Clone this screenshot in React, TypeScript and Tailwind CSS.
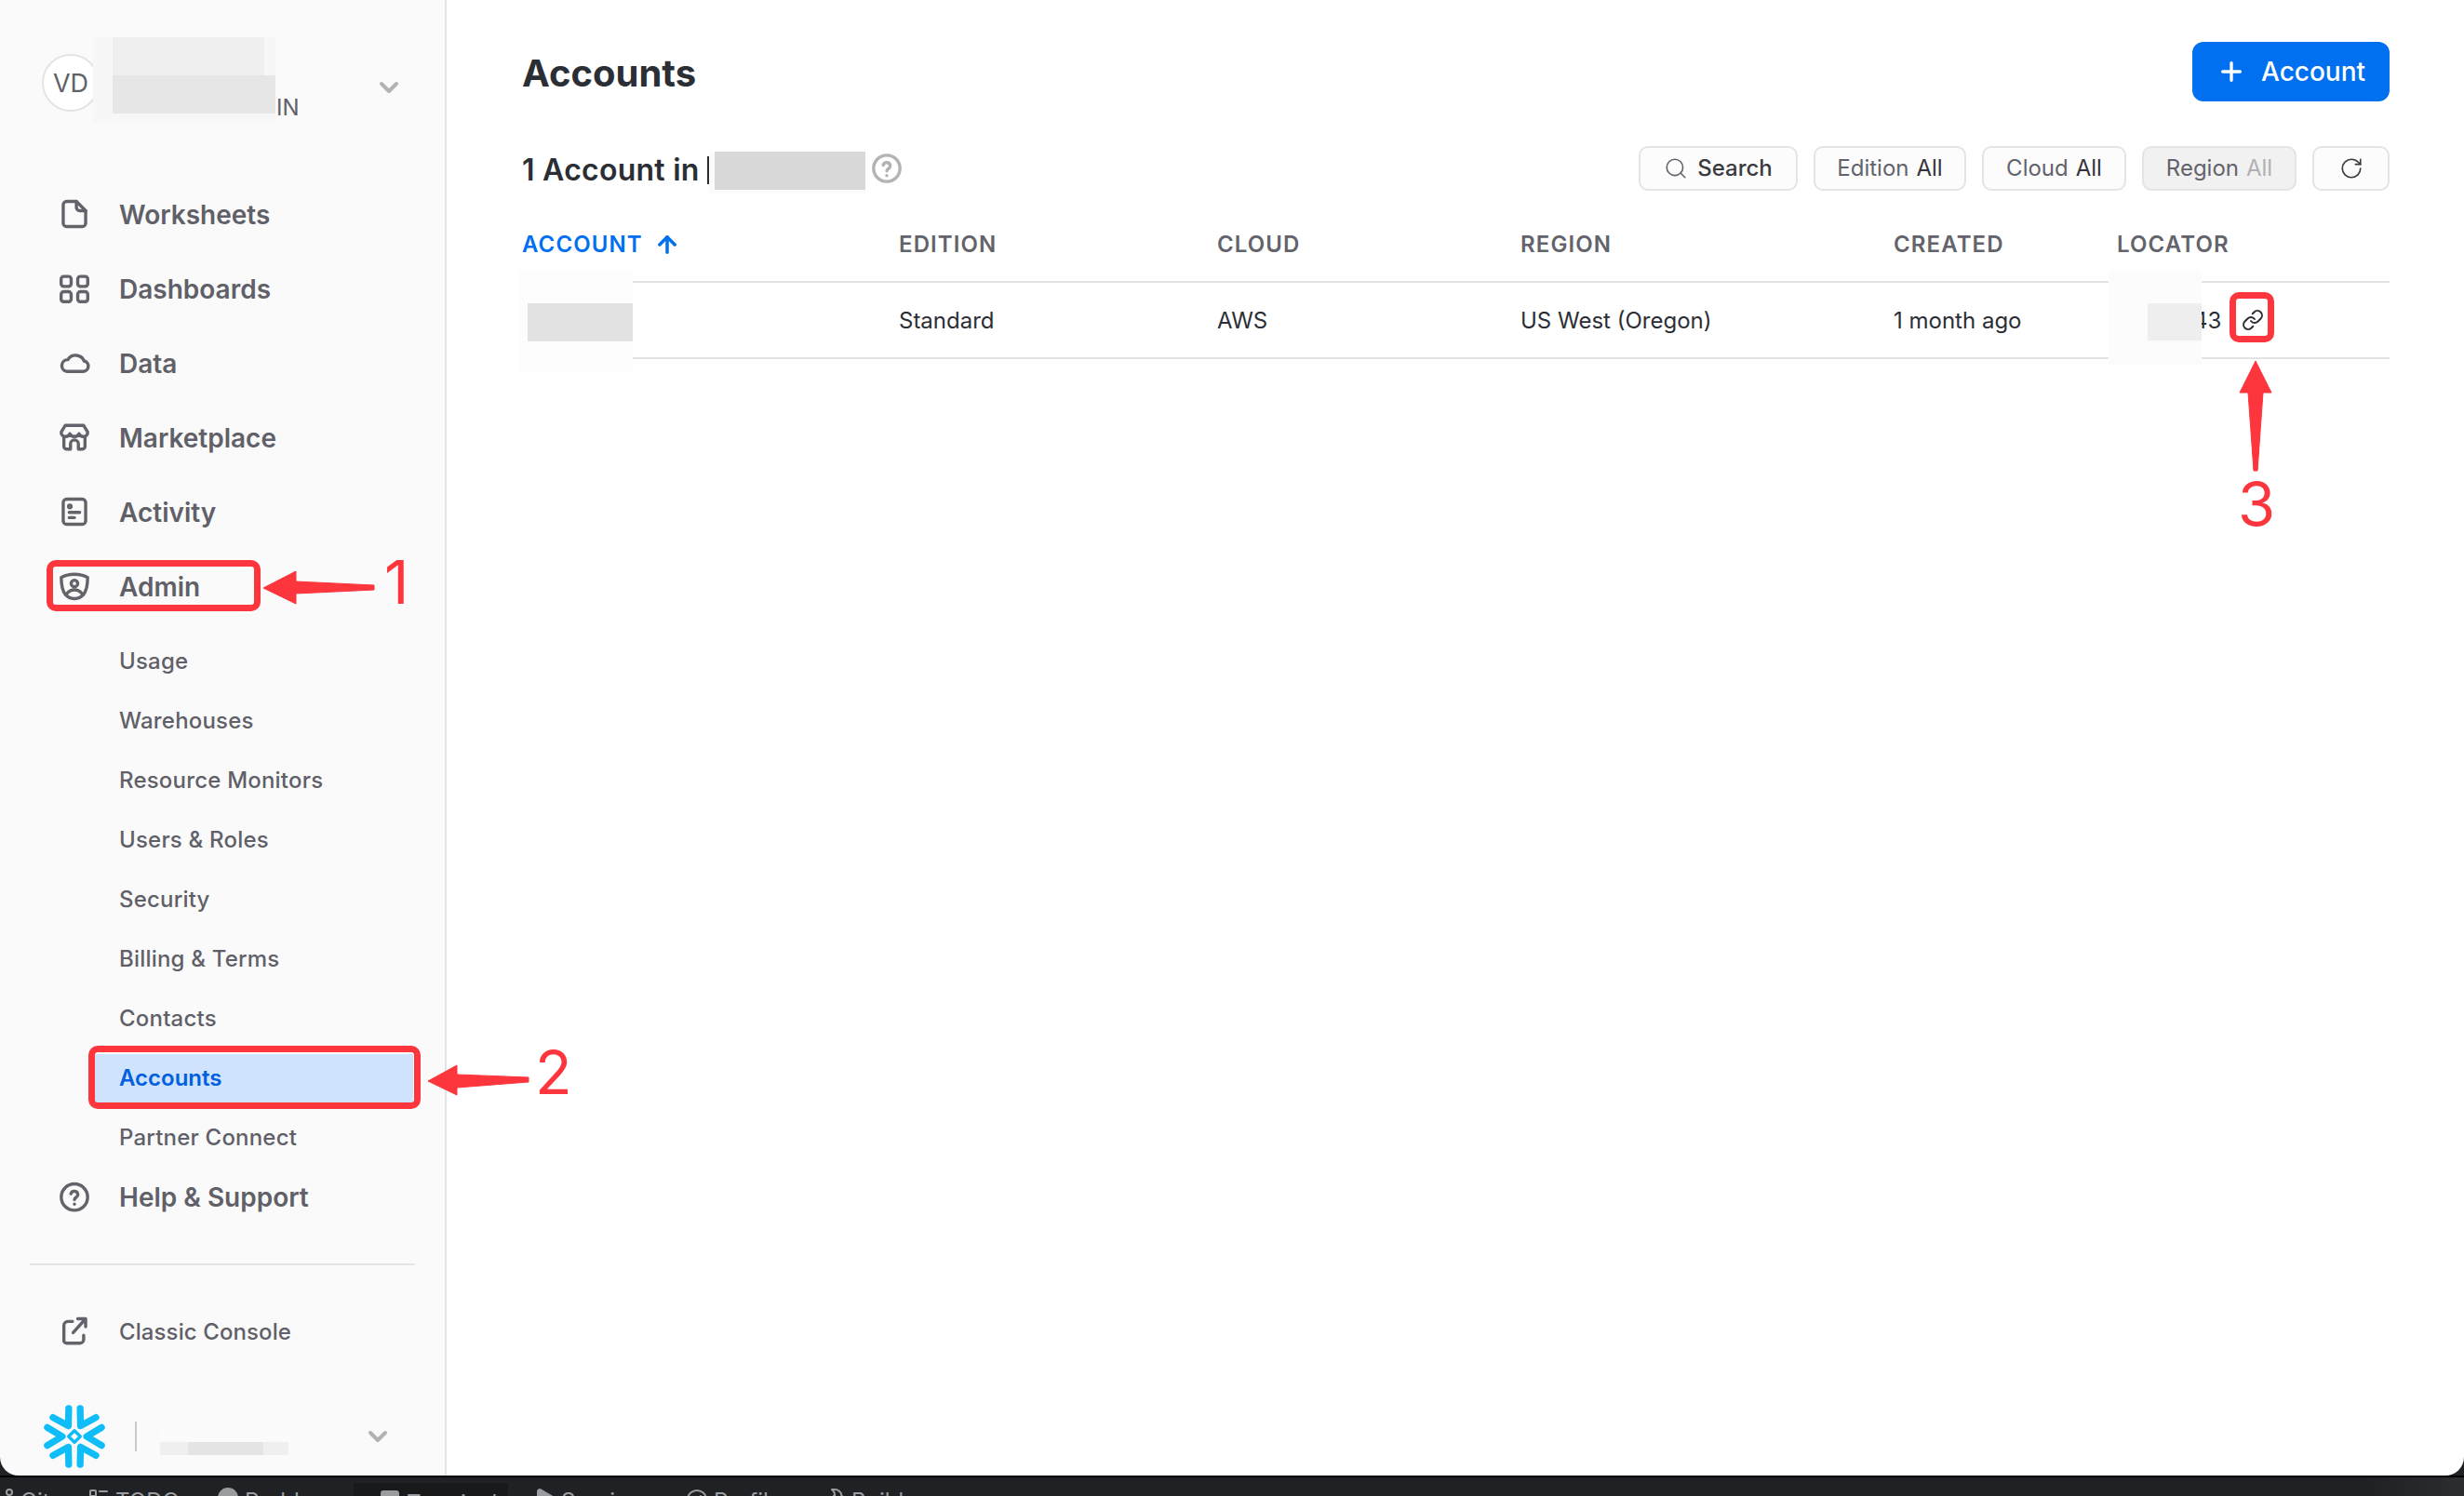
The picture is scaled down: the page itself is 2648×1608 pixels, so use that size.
import {
  ArrowUp,
  ChevronDown,
  CircleAlert,
  Gauge,
  GitBranch,
  Hammer,
  Link,
  ListTodo,
  Play,
  Plus,
  RotateCw,
  Search,
  SquareTerminal,
} from "lucide-react";
import type { ReactNode } from "react";

function NavIcon({ children }: { children: ReactNode }) {
  return (
    <svg
      viewBox="0 0 24 24"
      className="mb-[3px] h-[34px] w-[34px] shrink-0"
      fill="none"
      stroke="#62636b"
      strokeWidth={2.4}
      strokeLinecap="round"
      strokeLinejoin="round"
    >
      {children}
    </svg>
  );
}

const navItems: { label: string; icon: ReactNode }[] = [
  {
    label: "Worksheets",
    icon: (
      <>
        <path d="M13.5 2.5H6A2.5 2.5 0 0 0 3.5 5v14A2.5 2.5 0 0 0 6 21.5h12a2.5 2.5 0 0 0 2.5-2.5V9.5z" />
        <path d="M13.5 2.5V7A2.5 2.5 0 0 0 16 9.5h4.5" />
      </>
    ),
  },
  {
    label: "Dashboards",
    icon: (
      <>
        <rect x="1.9" y="2.9" width="7.6" height="7.6" rx="2" />
        <rect x="14.5" y="2.9" width="7.6" height="7.6" rx="2" />
        <rect x="1.9" y="14.5" width="7.6" height="7.6" rx="2" />
        <rect x="14.5" y="14.5" width="7.6" height="7.6" rx="2" />
      </>
    ),
  },
  {
    label: "Data",
    icon: (
      <path d="M6 18.5h12.5a4 4 0 0 0 .9-7.9A7 7 0 0 0 7 9.6a4.5 4.5 0 0 0-1 8.9z" />
    ),
  },
  {
    label: "Marketplace",
    icon: (
      <>
        <path d="M5 3h14l3 5c.3 2-1.3 3.5-3.2 3.5-1.6 0-2.8-.9-3.3-2.2-.5 1.3-1.8 2.2-3.5 2.2s-3-.9-3.5-2.2c-.5 1.3-1.7 2.2-3.3 2.2C3.3 11.5 1.7 10 2 8z" />
        <path d="M4 12v7a2 2 0 0 0 2 2h3v-4a3 3 0 0 1 6 0v4h3a2 2 0 0 0 2-2v-7" />
      </>
    ),
  },
  {
    label: "Activity",
    icon: (
      <>
        <rect x="3.5" y="2.5" width="17" height="19" rx="2.5" />
        <circle cx="8.5" cy="8" r="1" />
        <path d="M8 12.5h8M8 16.5h4" />
      </>
    ),
  },
  {
    label: "Admin",
    icon: (
      <>
        <path d="M12 3c3.5 0 7 .8 10 2.5 0 6-1.200 10.500-3.200 13-1.700 2-4.300 3-6.800 3s-5.100-1-6.800-3C3.200 16 2 11.500 2 5.500 5 3.800 8.500 3 12 3z" />
        <circle cx="12" cy="10" r="2.5" />
        <path d="M6.500 17.500c1.200-1.700 3.200-2.700 5.500-2.700s4.300 1 5.500 2.700" />
      </>
    ),
  },
];

const adminItems = [
  "Usage",
  "Warehouses",
  "Resource Monitors",
  "Users & Roles",
  "Security",
  "Billing & Terms",
  "Contacts",
  "Accounts",
  "Partner Connect",
];

const columns = ["EDITION", "CLOUD", "REGION", "CREATED", "LOCATOR"];

function SnowflakeLogo() {
  return (
    <svg viewBox="-35 -35 70 70" className="h-[68px] w-[68px] shrink-0">
      {[0, 60, 120, 180, 240, 300].map((angle) => (
        <path
          key={angle}
          d="M30 -10 L13.5 0 L30 10"
          fill="none"
          stroke="#0fbdf9"
          strokeWidth={7.5}
          strokeLinecap="round"
          strokeLinejoin="round"
          transform={`rotate(${angle})`}
        />
      ))}
      <path d="M0 -6.5 L6.5 0 L0 6.5 L-6.5 0 Z" fill="none" stroke="#0fbdf9" strokeWidth={3.5} strokeLinejoin="round" />
    </svg>
  );
}

function Sidebar() {
  return (
    <aside className="flex w-[480px] shrink-0 flex-col border-r-2 border-[#e4e4e4] bg-[#fafafa] text-[#5f6068]">
      <div className="flex h-[191px] shrink-0 items-start pl-[45px] pr-[44px] pt-[58px]">
        <div className="flex h-[62px] w-[62px] shrink-0 items-center justify-center rounded-full border-2 border-[#e4e4e4] bg-white pt-[2px] text-[27px] text-[#5f6068]">
          VD
        </div>
        <div className="flex-1 pl-[190px] pt-[44px] text-[24px] leading-[28px]">IN</div>
        <ChevronDown size={32} strokeWidth={3} className="mt-[20px] text-[#b2b2b4]" />
      </div>

      {navItems.map((item) => (
        <div key={item.label} className="flex h-[80px] shrink-0 items-center gap-[31px] pl-[63px] text-[28px] font-semibold">
          <NavIcon>{item.icon}</NavIcon>
          <span>{item.label}</span>
        </div>
      ))}

      <div className="mt-[8px] flex flex-col">
        {adminItems.map((label) =>
          label === "Accounts" ? (
            <div key={label} className="mx-[102px] my-[6px] mr-[34px] flex h-[52px] shrink-0 items-center bg-[#cfe3fd] pl-[26px] text-[24px] font-semibold text-[#0060e0]">
              {label}
            </div>
          ) : (
            <div key={label} className="flex h-[64px] shrink-0 items-center pl-[128px] text-[24px] font-medium tracking-[0.2px]">
              {label}
            </div>
          ),
        )}
      </div>

      <div className="flex h-[64px] shrink-0 items-center gap-[31px] pl-[63px] text-[28px] font-semibold">
        <NavIcon>
          <circle cx="12" cy="12.5" r="10" />
          <path d="M9.3 10a2.700 2.700 0 0 1 5.300.7c0 1.800-2.600 2.300-2.600 3.700" />
          <path d="M12 17.700v.1" />
        </NavIcon>
        <span>Help &amp; Support</span>
      </div>

      <div className="mx-[32px] mt-[39px] border-t-2 border-[#e4e4e4]" />

      <div className="mt-[40px] flex h-[64px] shrink-0 items-center gap-[31px] pl-[63px] text-[24px] font-medium tracking-[0.1px]">
        <NavIcon>
          <path d="M10.5 4.500H7A3 3 0 0 0 4 7.500V19a2 2 0 0 0 2 2h10a3 3 0 0 0 3-3v-3" />
          <path d="M11 13l9-10M14.500 2.500H20.500V8.500" />
        </NavIcon>
        <span>Classic Console</span>
      </div>

      <div className="mt-auto flex h-[84px] shrink-0 items-center pl-[46px] pr-[56px]">
        <SnowflakeLogo />
        <div className="ml-[31px] h-[32px] w-[2px] bg-[#c8c8c8]" />
        <ChevronDown size={32} strokeWidth={3} className="ml-auto text-[#b2b2b4]" />
      </div>
    </aside>
  );
}

function FilterButton({ label, value, width, disabled }: { label: string; value: string; width: string; disabled?: boolean }) {
  return (
    <button
      className={`flex h-[48px] items-center justify-center gap-[8px] rounded-[10px] border-2 border-[#e4e4e4] text-[24px] ${width} ${
        disabled ? "bg-[#f1f1f1]" : "bg-[#fcfcfc]"
      }`}
    >
      <span className="text-[#62636b]">{label}</span>
      <span className={disabled ? "text-[#b0b0b2]" : "text-[#34353a]"}>{value}</span>
    </button>
  );
}

function Main() {
  return (
    <main className="flex-1 bg-white pl-[81px] pr-[80px] pt-[45px] text-[#2b2e35]">
      <div className="flex h-[64px] items-center justify-between">
        <h1 className="pt-[4px] text-[40px] font-bold">Accounts</h1>
        <button className="flex h-[64px] w-[212px] items-center gap-[16px] rounded-[12px] bg-[#0070f0] pl-[26px] text-[28px] font-medium text-white">
          <Plus size={32} strokeWidth={2.5} />
          Account
        </button>
      </div>

      <div className="mt-[48px] flex h-[48px] items-center">
        <span className="pt-[4px] text-[32px] font-semibold tracking-[0.25px]">1 Account in</span>
        <svg viewBox="0 0 24 24" className="ml-[184px] h-[34px] w-[34px]" fill="none" stroke="#b3b3b5" strokeWidth={2.4} strokeLinecap="round">
          <circle cx="12" cy="12" r="10" />
          <path d="M9.3 9.500a2.700 2.700 0 0 1 5.300.7c0 1.800-2.600 2.300-2.600 3.700" />
          <path d="M12 17.400v.1" />
        </svg>
        <div className="ml-auto flex items-center gap-[17px]">
          <button className="flex h-[48px] w-[171px] items-center justify-center gap-[10px] rounded-[10px] border-2 border-[#e4e4e4] bg-[#fcfcfc] text-[24px] font-medium text-[#3a3b40]">
            <Search size={26} strokeWidth={1.5} className="text-[#62636b]" />
            Search
          </button>
          <FilterButton label="Edition" value="All" width="w-[164px]" />
          <FilterButton label="Cloud" value="All" width="w-[155px]" />
          <FilterButton label="Region" value="All" width="w-[166px]" disabled />
          <button className="flex h-[48px] w-[83px] items-center justify-center rounded-[10px] border-2 border-[#e4e4e4] bg-[#fcfcfc] text-[#3a3b40]">
            <RotateCw size={26} strokeWidth={1.5} />
          </button>
        </div>
      </div>

      <div className="mt-[17px] grid grid-cols-[405px_342px_326px_401px_240px_1fr] text-[24px]">
        <div className="flex h-[82px] items-center gap-[12px] border-b-2 border-[#e4e4e4] pt-[2px] font-semibold tracking-[1.1px] text-[#0070f0]">
          ACCOUNT
          <ArrowUp size={28} strokeWidth={3} />
        </div>
        {columns.map((col) => (
          <div key={col} className="flex h-[82px] items-center border-b-2 border-[#e4e4e4] pt-[2px] font-semibold tracking-[1.1px] text-[#62636b]">
            {col}
          </div>
        ))}
        <div className="h-[82px] border-b-2 border-[#e4e4e4]" />
        {["Standard", "AWS", "US West (Oregon)", "1 month ago"].map((cell) => (
          <div key={cell} className="flex h-[82px] items-center border-b-2 border-[#e4e4e4] pt-[2px]">
            {cell}
          </div>
        ))}
        <div className="flex h-[82px] items-center border-b-2 border-[#e4e4e4] pl-[82px] pt-[2px]">
          <span>43</span>
          <Link size={24} strokeWidth={2} className="ml-[22px] mb-[2px]" />
        </div>
      </div>
    </main>
  );
}

const statusTabs: { label: string; icon: ReactNode; className: string }[] = [
  { label: "Git", icon: <GitBranch size={24} />, className: "-ml-[8px] w-[102px]" },
  { label: "TODO", icon: <ListTodo size={24} />, className: "w-[139px]" },
  { label: "Problems", icon: <CircleAlert size={24} fill="#9a9ca0" />, className: "w-[147px]" },
  { label: "Terminal", icon: <SquareTerminal size={24} fill="#9a9ca0" />, className: "mt-[6px] w-[166px] bg-[#18191b] pl-[27px] !pt-[6px]" },
  { label: "Services", icon: <Play size={24} fill="#9a9ca0" />, className: "w-[191px] pl-[27px]" },
  { label: "Profiler", icon: <Gauge size={24} />, className: "w-[148px]" },
  { label: "Build", icon: <Hammer size={24} />, className: "w-[140px]" },
];

function StatusBar() {
  return (
    <div className="flex h-[22px] shrink-0 overflow-hidden border-t-2 border-black bg-[linear-gradient(90deg,#202124_96%,#2c2d30)]">
      {statusTabs.map((tab) => (
        <div
          key={tab.label}
          className={`flex items-start gap-[6px] pt-[10px] text-[24px] leading-[32px] text-[#9a9ca0] ${tab.className}`}
        >
          {tab.icon}
          <span>{tab.label}</span>
        </div>
      ))}
    </div>
  );
}

// red callouts and the redaction patches sit over the page, same as the markup in the screenshot
function Patch({ className }: { className: string }) {
  return <div className={`absolute ${className}`} />;
}

function Overlays() {
  return (
    <div className="pointer-events-none absolute inset-0">
      <Patch className="left-[100px] top-[40px] h-[92px] w-[196px] bg-[#f7f7f7]" />
      <Patch className="left-[121px] top-[40px] h-[42px] w-[163px] bg-[#eeefee]" />
      <Patch className="left-[121px] top-[81px] h-[41px] w-[175px] bg-[#e6e6e6]" />
      <Patch className="left-[172px] top-[1530px] h-[34px] w-[138px] bg-[#fbfbfb]" />
      <Patch className="left-[172px] top-[1550px] h-[14px] w-[138px] bg-[#efefef]" />
      <Patch className="left-[202px] top-[1550px] h-[14px] w-[81px] bg-[#e4e4e4]" />

      <Patch className="left-[760px] top-[168px] h-[30px] w-[2px] bg-[#2b2e35]" />
      <Patch className="left-[762px] top-[163px] h-[45px] w-[168px] bg-[#fbfbfb]" />
      <Patch className="left-[768px] top-[163px] h-[41px] w-[162px] bg-[#d8d8d8]" />
      <Patch className="left-[558px] top-[290px] h-[110px] w-[122px] bg-[#fdfdfd]" />
      <Patch className="left-[567px] top-[326px] h-[41px] w-[113px] bg-[#e2e2e2]" />
      <Patch className="left-[2266px] top-[292px] h-[100px] w-[100px] bg-[#fcfcfc]" />
      <Patch className="left-[2308px] top-[326px] h-[40px] w-[58px] bg-[#eeeeee]" />

      <div className="absolute left-[50px] top-[602px] h-[55px] w-[230px] rounded-[10px] border-[7px] border-[#fd353c]" />
      <div className="absolute left-[95px] top-[1124px] h-[68px] w-[357px] rounded-[10px] border-[7px] border-[#fd353c]" />
      <div className="absolute left-[2396px] top-[314px] h-[54px] w-[48px] rounded-[10px] border-[7px] border-[#fd353c]" />

      <svg viewBox="0 0 125 40" className="absolute left-[282px] top-[611px] h-[40px] w-[125px]">
        <path d="M1 21 L36 3 L36 14 L120 18 L120 23 L36 27 L36 38 Z" fill="#fd353c" stroke="#fd353c" strokeLinejoin="round" />
      </svg>
      <svg viewBox="0 0 112 36" className="absolute left-[459px] top-[1143px] h-[36px] w-[112px]">
        <path d="M1 19 L32 2 L32 12 L109 15 L109 20 L32 26 L32 34 Z" fill="#fd353c" stroke="#fd353c" strokeLinejoin="round" />
      </svg>
      <svg viewBox="0 0 38 120" className="absolute left-[2405px] top-[387px] h-[120px] w-[38px]">
        <path d="M19 1 L36 35 L27 35 L21 119 L17 119 L11 35 L2 35 Z" fill="#fd353c" stroke="#fd353c" strokeLinejoin="round" />
      </svg>

      <span className="absolute left-[413px] top-[588px] text-[65px] leading-[76px] text-[#fd353c]">1</span>
      <span className="absolute left-[575px] top-[1115px] text-[65px] leading-[76px] text-[#fd353c]">2</span>
      <span className="absolute left-[2405px] top-[504px] text-[65px] leading-[76px] text-[#fd353c]">3</span>
    </div>
  );
}

export default function App() {
  return (
    <div className="relative flex h-[1608px] w-[2648px] flex-col overflow-hidden bg-[#202124] font-['Inter',sans-serif]">
      <div className="flex h-[1586px] shrink-0 overflow-hidden rounded-b-[20px]">
        <Sidebar />
        <Main />
      </div>
      <StatusBar />
      <Overlays />
    </div>
  );
}
